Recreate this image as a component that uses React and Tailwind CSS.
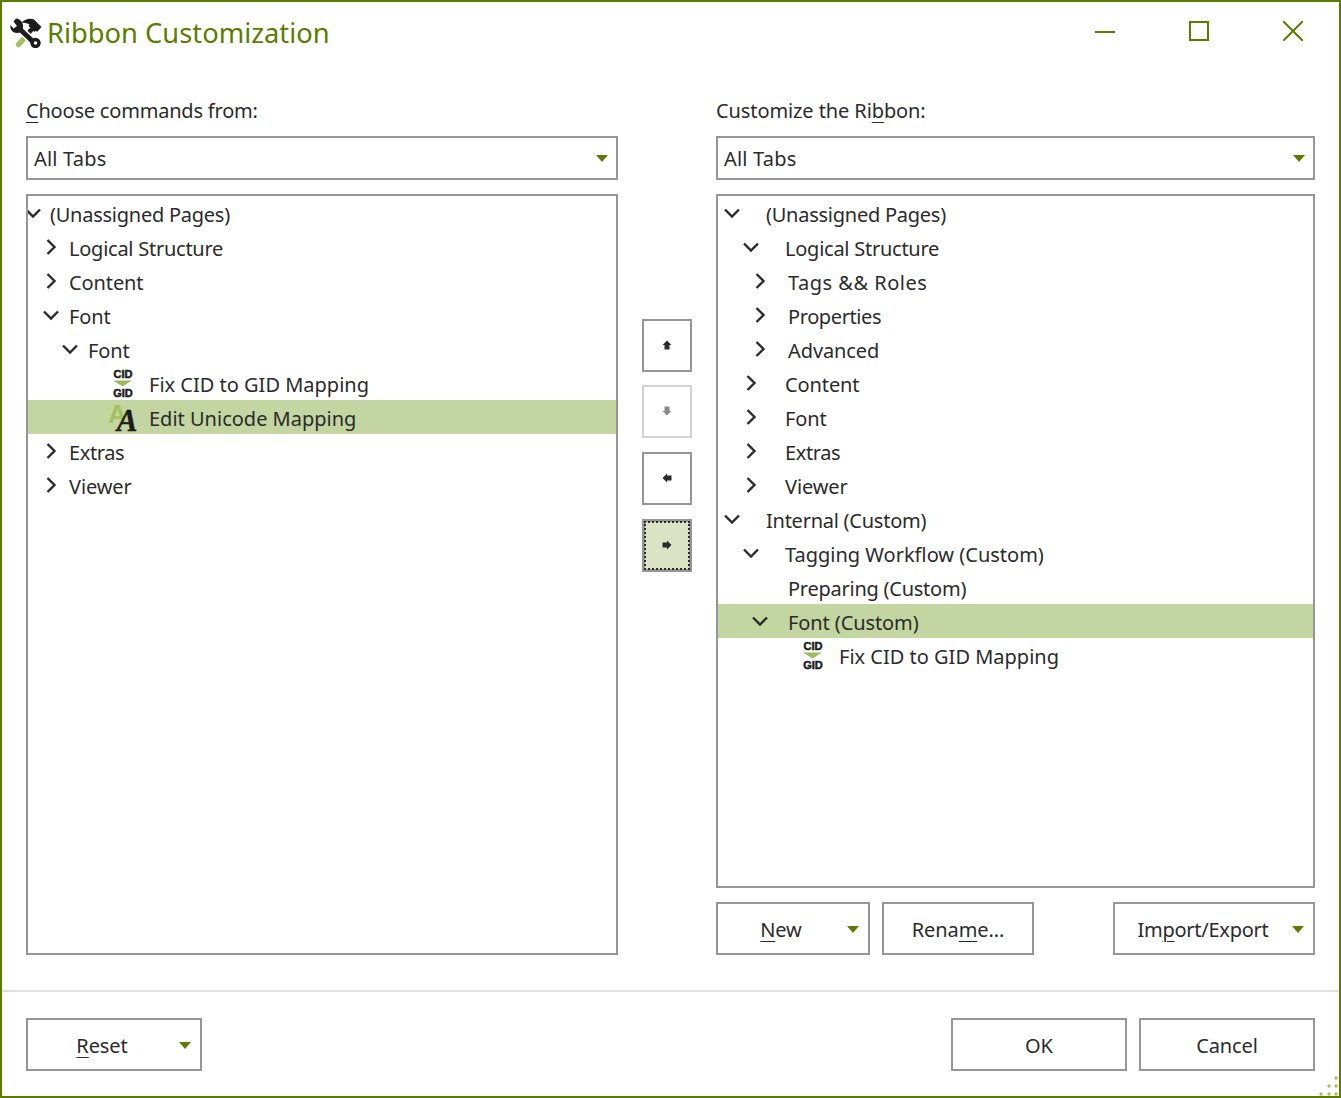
import React from "react";

const tight = "tracking-[-0.25px]";
const tighter = "tracking-[-0.4px]";
const normal = "tracking-normal";

const leftRows = [
  { label: "(Unassigned Pages)", chevron: "down", indent: "-ml-[3px]", box: "w-[25px]", track: tight },
  { label: "Logical Structure", chevron: "right", indent: "ml-[15px]", box: "w-[26px]", track: tight },
  { label: "Content", chevron: "right", indent: "ml-[15px]", box: "w-[26px]" },
  { label: "Font", chevron: "down", indent: "ml-[15px]", box: "w-[26px]" },
  { label: "Font", chevron: "down", indent: "ml-[34px]", box: "w-[26px]" },
  { label: "Fix CID to GID Mapping", icon: "cid", indent: "ml-[84px]", box: "w-[37px]", track: normal },
  { label: "Edit Unicode Mapping", icon: "font", indent: "ml-[84px]", box: "w-[37px]", selected: true, track: normal },
  { label: "Extras", chevron: "right", indent: "ml-[15px]", box: "w-[26px]", track: tighter },
  { label: "Viewer", chevron: "right", indent: "ml-[15px]", box: "w-[26px]" },
];

const rightRows = [
  { label: "(Unassigned Pages)", chevron: "down", indent: "ml-[6px]", box: "w-[42px]", track: tight },
  { label: "Logical Structure", chevron: "down", indent: "ml-[25px]", box: "w-[42px]", track: tight },
  { label: "Tags && Roles", chevron: "right", indent: "ml-[34px]", box: "w-[36px]", track: "tracking-[0.5px]" },
  { label: "Properties", chevron: "right", indent: "ml-[34px]", box: "w-[36px]", track: tighter },
  { label: "Advanced", chevron: "right", indent: "ml-[34px]", box: "w-[36px]" },
  { label: "Content", chevron: "right", indent: "ml-[25px]", box: "w-[42px]" },
  { label: "Font", chevron: "right", indent: "ml-[25px]", box: "w-[42px]" },
  { label: "Extras", chevron: "right", indent: "ml-[25px]", box: "w-[42px]", track: tighter },
  { label: "Viewer", chevron: "right", indent: "ml-[25px]", box: "w-[42px]" },
  { label: "Internal (Custom)", chevron: "down", indent: "ml-[6px]", box: "w-[42px]", track: tight },
  { label: "Tagging Workflow (Custom)", chevron: "down", indent: "ml-[25px]", box: "w-[42px]", track: normal },
  { label: "Preparing (Custom)", indent: "ml-[34px]", box: "w-[36px]", track: tight },
  { label: "Font (Custom)", chevron: "down", indent: "ml-[34px]", box: "w-[36px]", selected: true },
  { label: "Fix CID to GID Mapping", icon: "cid", indent: "ml-[84px]", box: "w-[37px]", track: normal },
];

function Chevron({ dir }) {
  return (
    <svg width="16" height="16" viewBox="0 0 16 16" fill="none" stroke="#2b2b2b" strokeWidth="2.4" className="-mt-[1px] shrink-0">
      {dir === "down" ? <path d="M1 4.500 8 11.500l7-7" /> : <path d="M4.500 1 11.500 8l-7 7" />}
    </svg>
  );
}

function CidIcon() {
  return (
    <svg width="24" height="32" viewBox="0 0 24 32" fontFamily="'Liberation Sans', sans-serif" fontWeight="700" fontSize="11" textAnchor="middle" fill="#1c1c1c" className="shrink-0">
      <text x="11" y="11" stroke="#1c1c1c" strokeWidth="0.5">CID</text>
      <path d="M1 13.500h19l-9.500 6z" fill="#9dba5c" />
      <text x="11" y="30" stroke="#1c1c1c" strokeWidth="0.5">GID</text>
    </svg>
  );
}

function FontIcon() {
  return (
    <svg width="30" height="34" viewBox="0 0 30 34" textAnchor="middle" className="-ml-[3px] shrink-0">
      <text x="8.500" y="23" fontFamily="'Liberation Sans', sans-serif" fontWeight="700" fontSize="26" fill="#a4c15f">A</text>
      <text x="18" y="31" fontFamily="'Liberation Serif', serif" fontWeight="700" fontStyle="italic" fontSize="31" fill="#1c1c1c" stroke="#1c1c1c" strokeWidth="0.4">A</text>
    </svg>
  );
}

function TreeRow({ row }) {
  return (
    <div className={"flex h-[34px] shrink-0 items-center " + (row.selected ? "bg-[#c3d5a0]" : "")}>
      <div className={"flex shrink-0 items-center " + row.indent + " " + row.box}>
        {row.chevron && <Chevron dir={row.chevron} />}
        {row.icon === "cid" && <CidIcon />}
        {row.icon === "font" && <FontIcon />}
      </div>
      <span className={"whitespace-nowrap pt-[4px] " + (row.track || "tracking-[-0.1px]")}>{row.label}</span>
    </div>
  );
}

function Caret() {
  return (
    <svg width="12" height="7" viewBox="0 0 12 7" className="shrink-0">
      <path d="M0 0h12L6 7z" fill="#5a7d00" />
    </svg>
  );
}

function Combo() {
  return (
    <div className="flex h-[44px] items-center justify-between border-2 border-[#969696] pl-[6px] pr-[8px]">
      <span className="pt-[2px] tracking-[0.2px]">All Tabs</span>
      <Caret />
    </div>
  );
}

function ArrowButton({ d, className }) {
  return (
    <button className={"flex h-[53px] w-[50px] items-center justify-center border-2 " + className}>
      <svg width="10" height="10" viewBox="0 0 10 10" className="-mt-[1px]">
        <path d={d} fill="currentColor" />
      </svg>
    </button>
  );
}

function DialogButton({ className, children }) {
  return (
    <button className={"flex h-[53px] items-center justify-center border-2 border-[#969696] pt-[2px] tracking-[-0.1px] " + className}>
      {children}
    </button>
  );
}

function Key({ children }) {
  return <span className="underline decoration-1 underline-offset-[4px]">{children}</span>;
}

export default function App() {
  return (
    <div className="relative flex h-[1098px] w-[1341px] flex-col overflow-hidden border-2 border-[#5a7d00] bg-white font-['Noto_Sans',sans-serif] text-[20px] text-[#2b2b2b]">
      {/* title bar */}
      <div className="flex h-[60px] shrink-0 items-center">
        <svg width="32" height="30" viewBox="0 0 32 30" className="ml-[8px] mt-[2px] shrink-0" fill="none">
          <path d="M8.500 26.500 14.500 20" stroke="#a4c15f" strokeWidth="5.500" strokeLinecap="round" />
          <path d="M14 20 22 11" stroke="#1c1c1c" strokeWidth="4.500" />
          <path d="M11.500 4.500C15.500 .5 20 0 24 1.500l7.500 7.500-4 4.500-2-.5-1 1-6-6 1-1.500C18 5.500 15 4.500 11.500 4.500z" fill="#1c1c1c" />
          <path d="M7 8.500 25 25.500" stroke="#ffffff" strokeWidth="8" />
          <path d="M7 8.500 25 25.500" stroke="#1c1c1c" strokeWidth="5" />
          <path d="M6 .5 3.500 3.500 7 8 3.500 10.500.5 7C-.5 11.500 3 15.500 7.500 15c4-.4 6-3.500 5.500-7.500C12.500 3.500 9.500 .5 6 .5z" fill="#1c1c1c" />
          <circle cx="25.500" cy="25" r="3.500" stroke="#1c1c1c" strokeWidth="3.400" fill="#ffffff" />
        </svg>
        <span className="ml-[5px] pt-[2px] text-[27.3px] text-[#5a7d00]">Ribbon Customization</span>
        <div className="ml-auto mr-[36px] flex items-center gap-[74px]">
          <span className="h-[2px] w-[20px] bg-[#5a7d00]" />
          <span className="h-[20px] w-[20px] -translate-y-[1px] border-2 border-[#5a7d00]" />
          <svg width="20" height="20" viewBox="0 0 20 20" className="-translate-y-[1px]" stroke="#5a7d00" strokeWidth="2">
            <path d="M0 0l20 20M20 0 0 20" />
          </svg>
        </div>
      </div>

      {/* main area */}
      <div className="flex h-[893px] shrink-0 pl-[24px] pr-[24px] pt-[34px]">
        <div className="flex w-[592px] shrink-0 flex-col">
          <div className="h-[40px] leading-[30px] tracking-[-0.2px]"><Key>C</Key>hoose commands from:</div>
          <Combo />
          <div className="mt-[14px] flex h-[761px] flex-col overflow-hidden border-2 border-[#969696]">
            {leftRows.map((row, i) => <TreeRow key={i} row={row} />)}
          </div>
        </div>

        <div className="flex w-[98px] shrink-0 flex-col items-center pt-[223px]">
          <ArrowButton className="border-[#969696] text-[#2b2b2b]" d="M5 0.500 9.500 5H7.500V9.500H2.500V5H0.500z" />
          <ArrowButton className="mt-[13px] border-[#d2d2d2] text-[#8a8a8a]" d="M5 9.500 9.500 5H7.500V0.500H2.500V5H0.500z" />
          <ArrowButton className="mt-[14px] border-[#969696] text-[#2b2b2b]" d="M0.500 5 5 0.500V2.500H9.500V7.500H5V9.500z" />
          <ArrowButton className="relative mt-[14px] border-[3px] border-[#969696] bg-[#dce3c5] text-[#2b2b2b] outline-2 outline-dotted -outline-offset-[4px] outline-[#2b2b2b]" d="M9.500 5 5 0.500V2.500H0.500V7.500H5V9.500z" />
        </div>

        <div className="flex w-[599px] shrink-0 flex-col">
          <div className="h-[40px] leading-[30px] tracking-[-0.1px]">Customize the Ri<Key>b</Key>bon:</div>
          <Combo />
          <div className="mt-[14px] flex h-[694px] flex-col overflow-hidden border-2 border-[#969696]">
            {rightRows.map((row, i) => <TreeRow key={i} row={row} />)}
          </div>
          <div className="mt-[14px] flex">
            <DialogButton className="relative w-[154px] pr-[24px]">
              <span><Key>N</Key>ew</span>
              <span className="absolute right-[9px] top-[22px] flex"><Caret /></span>
            </DialogButton>
            <DialogButton className="ml-[12px] w-[152px]">
              <span>Rena<Key>m</Key>e...</span>
            </DialogButton>
            <DialogButton className="relative ml-auto w-[202px] pr-[22px]">
              <span className="tracking-[-0.25px]">Im<Key>p</Key>ort/Export</span>
              <span className="absolute right-[9px] top-[22px] flex"><Caret /></span>
            </DialogButton>
          </div>
        </div>
      </div>

      {/* footer */}
      <div className="mt-[35px] h-[2px] shrink-0 bg-[#e0e0e0]" />
      <div className="flex flex-1 pl-[24px] pr-[24px] pt-[26px]">
        <DialogButton className="relative w-[176px] pr-[24px]">
          <span><Key>R</Key>eset</span>
          <span className="absolute right-[9px] top-[22px] flex"><Caret /></span>
        </DialogButton>
        <DialogButton className="ml-auto w-[176px]">OK</DialogButton>
        <DialogButton className="ml-[12px] w-[176px]">Cancel</DialogButton>
      </div>

      {/* resize grip */}
      <svg width="20" height="24" viewBox="0 0 20 24" className="absolute bottom-0 right-0" fill="#a4c15f">
        <circle cx="17" cy="6" r="1.700" />
        <circle cx="10" cy="14" r="1.700" />
        <circle cx="17" cy="14" r="1.700" />
        <circle cx="2" cy="22" r="1.700" />
        <circle cx="10" cy="22" r="1.700" />
        <circle cx="17" cy="22" r="1.700" />
      </svg>
    </div>
  );
}
